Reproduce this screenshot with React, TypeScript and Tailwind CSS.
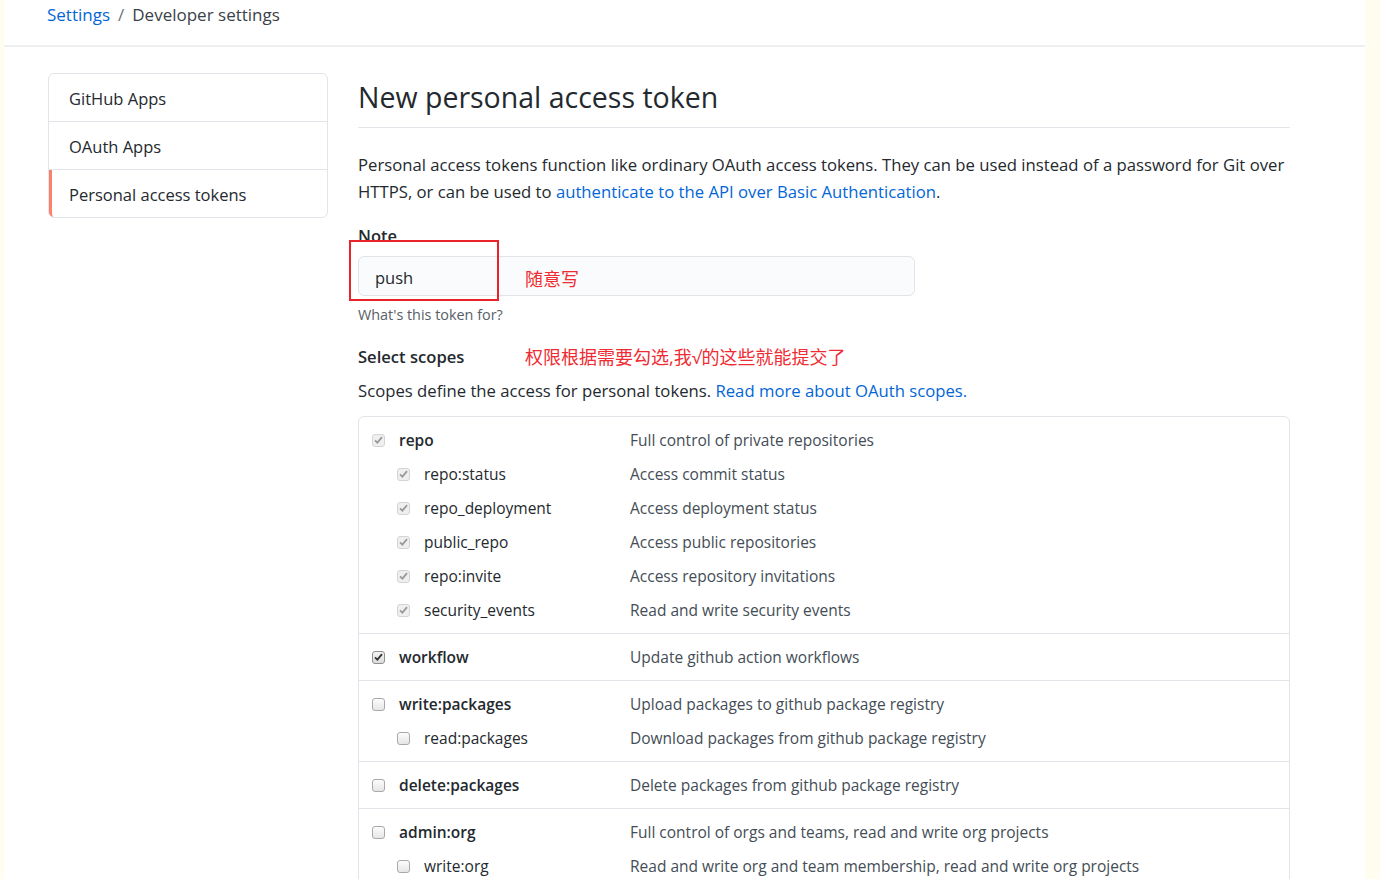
import React from "react";

type Box = "disabled" | "checked" | "empty";

type Scope = {
  name: string;
  desc: string;
  box: Box;
  child?: boolean;
};

const groups: Scope[][] = [
  [
    { name: "repo", desc: "Full control of private repositories", box: "disabled" },
    { name: "repo:status", desc: "Access commit status", box: "disabled", child: true },
    { name: "repo_deployment", desc: "Access deployment status", box: "disabled", child: true },
    { name: "public_repo", desc: "Access public repositories", box: "disabled", child: true },
    { name: "repo:invite", desc: "Access repository invitations", box: "disabled", child: true },
    { name: "security_events", desc: "Read and write security events", box: "disabled", child: true },
  ],
  [{ name: "workflow", desc: "Update github action workflows", box: "checked" }],
  [
    { name: "write:packages", desc: "Upload packages to github package registry", box: "empty" },
    { name: "read:packages", desc: "Download packages from github package registry", box: "empty", child: true },
  ],
  [{ name: "delete:packages", desc: "Delete packages from github package registry", box: "empty" }],
  [
    { name: "admin:org", desc: "Full control of orgs and teams, read and write org projects", box: "empty" },
    { name: "write:org", desc: "Read and write org and team membership, read and write org projects", box: "empty", child: true },
    { name: "read:org", desc: "Read org and team membership, read org projects", box: "empty", child: true },
  ],
];

function Checkbox({ kind }: { kind: Box }) {
  if (kind === "empty") {
    return (
      <span className="block w-[13px] h-[13px] rounded-[3px] border border-[#a9a9a9] bg-gradient-to-b from-[#fcfcfc] to-[#e6e6e6]" />
    );
  }
  const dark = kind === "checked";
  return (
    <span
      className={
        dark
          ? "flex items-center justify-center w-[13px] h-[13px] rounded-[3px] border border-[#8f8f8f] bg-gradient-to-b from-[#f4f4f4] to-[#dcdcdc]"
          : "flex items-center justify-center w-[13px] h-[13px] rounded-[3px] border border-[#d4d4d4] bg-[#efefef]"
      }
    >
      <svg width="9" height="8" viewBox="0 0 9 8">
        <path
          d="M1 4.3 L3.4 6.6 L8 1.2"
          fill="none"
          stroke={dark ? "#333333" : "#9a9a9a"}
          strokeWidth="1.8"
        />
      </svg>
    </span>
  );
}

export default function App() {
  return (
    <div
      className="flex min-h-screen bg-[#fffdf0] text-[#24292e]"
      style={{ fontFamily: "'Open Sans', 'Noto Sans CJK SC', sans-serif" }}
    >
      <div className="ml-[4px] w-[1361px] bg-white">
        {/* Breadcrumb */}
        <header className="h-[47px] border-b-2 border-[#eeeff1] pl-[43px] pt-[3px]">
          <div className="flex items-center gap-[8px] text-[17px] leading-[24px]">
            <span className="text-[#0366d6]">Settings</span>
            <span className="text-[#6a737d]">/</span>
            <span className="text-[#3b4148]">Developer settings</span>
          </div>
        </header>

        <div className="flex pt-[26px]">
          {/* Sidebar */}
          <nav className="ml-[44px] w-[280px] shrink-0 self-start rounded-[6px] border border-[#e1e4e8] text-[16.5px]">
            <div className="h-[48px] flex items-center px-[20px] pt-[4px] border-b border-[#e1e4e8]">GitHub Apps</div>
            <div className="h-[48px] flex items-center px-[20px] pt-[4px] border-b border-[#e1e4e8]">OAuth Apps</div>
            <div className="h-[47px] flex items-center pl-[17px] pr-[20px] pt-[4px] border-l-[3px] border-[#f9826c] rounded-bl-[5px]">
              Personal access tokens
            </div>
          </nav>

          {/* Main */}
          <main className="ml-[30px] w-[932px] pt-[6px]">
            <h1 className="text-[28.5px] leading-[36px] font-normal pb-[12px] border-b border-[#e1e4e8]">
              New personal access token
            </h1>

            <p className="mt-[23px] text-[16.7px] leading-[27px]">
              Personal access tokens function like ordinary OAuth access tokens. They can be used instead of a password
              for Git over HTTPS, or can be used to{" "}
              <span className="text-[#0366d6]">authenticate to the API over Basic Authentication</span>.
            </p>

            <div className="mt-[21px] text-[16.5px] leading-[20px] font-semibold">Note</div>
            <div className="relative mt-[10px] w-[557px]">
              <div className="h-[40px] flex items-center px-[16px] pt-[4px] rounded-[6px] border border-[#e1e4e8] bg-[#fafbfc] text-[16.5px]">
                push
              </div>
              <div className="absolute left-[-9px] top-[-16px] w-[150px] h-[61px] border-2 border-[#e8232a]" />
              <div className="absolute left-[167px] top-[11px] text-[18px] leading-[24px] text-[#ef2b33]">随意写</div>
            </div>
            <div className="mt-[9px] text-[14.4px] leading-[20px] text-[#586069]">What's this token for?</div>

            <div className="mt-[22px] flex items-center h-[20px]">
              <span className="w-[167px] text-[16.6px] font-semibold">Select scopes</span>
              <span className="text-[18px] text-[#ef2b33]">权限根据需要勾选,我√的这些就能提交了</span>
            </div>
            <p className="mt-[12px] text-[16.7px] leading-[24px]">
              Scopes define the access for personal tokens.{" "}
              <span className="text-[#0366d6]">Read more about OAuth scopes.</span>
            </p>

            <div className="mt-[13px] rounded-t-[6px] border border-[#e1e4e8]">
              {groups.map((group, gi) => (
                <div key={gi} className={gi > 0 ? "border-t border-[#e1e4e8] py-[6px]" : "py-[6px]"}>
                  {group.map((s) => (
                    <div key={s.name} className="flex items-center h-[34px] text-[15.5px] leading-[20px]">
                      <div
                        className={
                          s.child
                            ? "w-[271px] shrink-0 flex items-center gap-[14px] pl-[38px]"
                            : "w-[271px] shrink-0 flex items-center gap-[14px] pl-[13px]"
                        }
                      >
                        <Checkbox kind={s.box} />
                        <span className={s.child ? "" : "font-semibold"}>{s.name}</span>
                      </div>
                      <div className="text-[#444d56]">{s.desc}</div>
                    </div>
                  ))}
                </div>
              ))}
            </div>
          </main>
        </div>
      </div>
    </div>
  );
}
